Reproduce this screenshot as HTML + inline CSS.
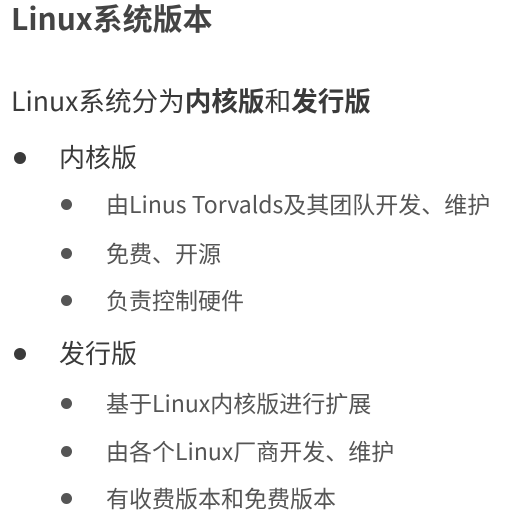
<!DOCTYPE html>
<html><head><meta charset="utf-8"><style>
html,body{margin:0;background:#fff;width:508px;height:521px;overflow:hidden}
body{font-family:"Noto Sans CJK SC","Liberation Sans",sans-serif;color:#3a3a3a;position:relative}
.t{position:absolute;white-space:nowrap;line-height:1}
.d{position:absolute;border-radius:50%;background:#3a3a3a}
.s{font-size:23px;color:#555}
</style></head><body>
<div class="t" style="left:11px;top:2px;font-size:30px;font-weight:bold;color:#444">Linux系统版本</div>
<div class="t" style="left:11px;top:87px;font-size:26.6px;color:#3a3a3a">Linux系统分为<b>内核版</b>和<b>发行版</b></div>
<div class="d" style="left:14px;top:152px;width:12px;height:12px"></div>
<div class="t" style="left:59px;top:144px;font-size:26px">内核版</div>
<div class="d" style="left:61px;top:199px;width:11px;height:11px;background:#555"></div>
<div class="t s" style="left:106px;top:192px">由Linus Torvalds及其团队开发、维护</div>
<div class="d" style="left:61px;top:248px;width:11px;height:11px;background:#555"></div>
<div class="t s" style="left:106px;top:241px">免费、开源</div>
<div class="d" style="left:61px;top:295px;width:11px;height:11px;background:#555"></div>
<div class="t s" style="left:106px;top:288px">负责控制硬件</div>
<div class="d" style="left:14px;top:348px;width:12px;height:12px"></div>
<div class="t" style="left:59px;top:340px;font-size:26px">发行版</div>
<div class="d" style="left:61px;top:398px;width:11px;height:11px;background:#555"></div>
<div class="t s" style="left:106px;top:391px">基于Linux内核版进行扩展</div>
<div class="d" style="left:61px;top:446px;width:11px;height:11px;background:#555"></div>
<div class="t s" style="left:106px;top:439px">由各个Linux厂商开发、维护</div>
<div class="d" style="left:61px;top:493px;width:11px;height:11px;background:#555"></div>
<div class="t s" style="left:106px;top:486px">有收费版本和免费版本</div>
</body></html>
